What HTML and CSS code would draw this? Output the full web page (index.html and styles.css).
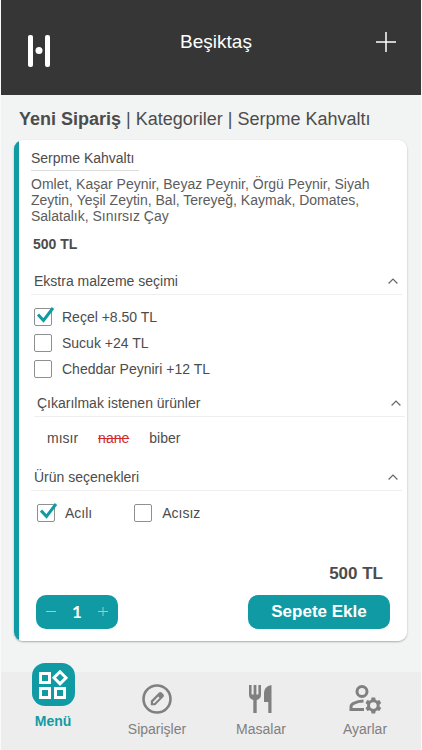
FILE: index.html
```html
<!DOCTYPE html>
<html lang="tr">
<head>
<meta charset="utf-8">
<meta name="viewport" content="width=device-width, initial-scale=1">
<title>Yeni Sipariş</title>
<link rel="stylesheet" href="styles.css">
</head>
<body>
<header class="topbar">
  <svg class="logo" width="22" height="32" viewBox="0 0 22 32" role="img" aria-label="H">
    <rect width="5" height="32" rx="2"/><rect x="17" width="5" height="32" rx="2"/><circle cx="11" cy="15.500" r="3.500"/>
  </svg>
  <h1 class="branch">Beşiktaş</h1>
  <button class="add" type="button" aria-label="Ekle">
    <svg width="20" height="20" viewBox="0 0 20 20"><path d="M10 0v20M0 10h20"/></svg>
  </button>
</header>

<main class="content">
  <nav class="crumbs" aria-label="Konum"><strong>Yeni Sipariş</strong> | <a href="#">Kategoriler</a> | <a href="#">Serpme Kahvaltı</a></nav>

  <form class="card">
    <h2 class="name">Serpme Kahvaltı</h2>
    <p class="desc">Omlet, Kaşar Peynir, Beyaz Peynir, Örgü Peynir, Siyah Zeytin, Yeşil Zeytin, Bal, Tereyeğ, Kaymak, Domates, Salatalık, Sınırsız Çay</p>
    <p class="price">500 TL</p>

    <section class="group">
      <button class="heading" type="button">Ekstra malzeme seçimi
        <svg class="chevron" width="10" height="6" viewBox="0 0 10 6"><path d="M.6 5.500 5 1l4.400 4.500"/></svg></button>
      <div class="options">
        <label class="option"><span class="box"><input type="checkbox" checked><svg class="tick" width="18" height="16" viewBox="0 0 18 16"><path d="M1 7.500 6.500 13.500 16 1"/></svg></span>Reçel +8.50 TL</label>
        <label class="option"><span class="box"><input type="checkbox"><svg class="tick" width="18" height="16" viewBox="0 0 18 16"><path d="M1 7.500 6.500 13.500 16 1"/></svg></span>Sucuk +24 TL</label>
        <label class="option"><span class="box"><input type="checkbox"><svg class="tick" width="18" height="16" viewBox="0 0 18 16"><path d="M1 7.500 6.500 13.500 16 1"/></svg></span>Cheddar Peyniri +12 TL</label>
      </div>
    </section>

    <section class="group group-removals">
      <button class="heading" type="button">Çıkarılmak istenen ürünler
        <svg class="chevron" width="10" height="6" viewBox="0 0 10 6"><path d="M.6 5.500 5 1l4.400 4.500"/></svg></button>
      <div class="removals">
        <button type="button">mısır</button>
        <button type="button" class="removed">nane</button>
        <button type="button">biber</button>
      </div>
    </section>

    <section class="group group-choices">
      <button class="heading" type="button">Ürün seçenekleri
        <svg class="chevron" width="10" height="6" viewBox="0 0 10 6"><path d="M.6 5.500 5 1l4.400 4.500"/></svg></button>
      <div class="options options-row">
        <label class="option"><span class="box"><input type="checkbox" checked><svg class="tick" width="18" height="16" viewBox="0 0 18 16"><path d="M1 7.500 6.500 13.500 16 1"/></svg></span>Acılı</label>
        <label class="option"><span class="box"><input type="checkbox"><svg class="tick" width="18" height="16" viewBox="0 0 18 16"><path d="M1 7.500 6.500 13.500 16 1"/></svg></span>Acısız</label>
      </div>
    </section>

    <p class="total">500 TL</p>
    <div class="actions">
      <div class="stepper">
        <button type="button" aria-label="Azalt"><svg width="10" height="10" viewBox="0 0 10 10"><path d="M0 4.500h10"/></svg></button>
        <output>1</output>
        <button type="button" aria-label="Artır"><svg width="10" height="10" viewBox="0 0 10 10"><path d="M0 4.500h10M5 0v9"/></svg></button>
      </div>
      <button class="submit" type="button">Sepete Ekle</button>
    </div>
  </form>
</main>

<nav class="tabs" aria-label="Ana menü">
  <a class="tab active" href="#">
    <span class="tile"><svg width="30" height="30" viewBox="0 0 30 30"><path d="M2.500 3.500h9v9h-9zM2.500 18.500h9v9h-9zM17.500 18.500h9v9h-9zM22 1.800l6 6-6 6-6-6z"/></svg></span>
    Menü</a>
  <a class="tab" href="#">
    <svg width="30" height="30" viewBox="0 0 30 30"><circle cx="15" cy="15" r="13.500" fill="none" stroke="currentColor" stroke-width="2.600"/><path fill="currentColor" fill-rule="evenodd" d="M8.800 21.200v-4.400l8.200-8.200q1.300-1.200 2.700 0l1.700 1.700q1.200 1.400 0 2.700l-8.200 8.200zM11 19.200h1.300l5.300-5.300-1.400-1.400-5.200 5.400z"/></svg>
    Siparişler</a>
  <a class="tab" href="#">
    <svg width="24" height="30" viewBox="0 0 24 30"><path fill="currentColor" d="M0 1h2.600v9.500h2V1h2.800v9.500h2V1H12v9.500q0 4.500-4.300 5.400V29H4.300V15.900Q0 15 0 10.500zM22.500 1v28h-3.200V18H15V9q0-6.500 7.500-8z"/></svg>
    Masalar</a>
  <a class="tab" href="#">
    <svg width="34" height="30" viewBox="0 0 34 30"><g fill="none" stroke="currentColor" stroke-width="3"><circle cx="14" cy="7.500" r="5"/><path d="M16 25.500H3v-2.700q0-2.300 2.500-3.500 4.500-2.200 10-2.300"/></g><path fill="currentColor" fill-rule="evenodd" transform="translate(2.500 2.300) scale(.9)" d="M23.400 12.500h4l.5 2.400 1.900 1.100 2.300-.8 2 3.400-1.800 1.600v2.300l1.800 1.600-2 3.400-2.300-.8-1.900 1.100-.5 2.400h-4l-.5-2.400-1.900-1.100-2.300.8-2-3.400 1.800-1.600v-2.300l-1.800-1.600 2-3.400 2.300.8 1.900-1.100zM25.400 17.700a3.700 3.700 0 1 0 0 7.400 3.700 3.700 0 0 0 0-7.400z"/></svg>
    Ayarlar</a>
</nav>
</body>
</html>
```
FILE: styles.css
```css
* {
  box-sizing: border-box;
}

body {
  --teal: #109ba4;
  --text: #4c4c4c;
  display: flex;
  flex-direction: column;
  min-height: 100vh;
  margin: 0;
  border: solid #f9fafa;
  border-width: 0 1px;
  background: #f2f4f4;
  color: var(--text);
  font: 14px/16px "Liberation Sans", Arial, sans-serif;
}

h1, h2, p {
  margin: 0;
  font-weight: normal;
}

button {
  padding: 0;
  border: 0;
  background: none;
  color: inherit;
  font: inherit;
  cursor: pointer;
}

a {
  color: inherit;
  text-decoration: none;
}

svg {
  flex: none;
}

.topbar {
  display: grid;
  grid-template-columns: 1fr auto 1fr;
  align-items: start;
  height: 95px;
  padding: 31px 25px 0 27px;
  background: #363636;
  color: #fff;
}

.logo {
  margin-top: 4px;
  fill: #fff;
}

.branch {
  padding-left: 8px;
  font-size: 19px;
  line-height: 22px;
}

.add {
  justify-self: end;
  height: 22px;
}

.add svg {
  display: block;
  fill: none;
  stroke: #fff;
  stroke-width: 1.5;
}

.content {
  flex: 1;
  padding: 14px 14px 31px 13px;
}

.crumbs {
  margin: 0 0 11px 5px;
  font-size: 18px;
  line-height: 20px;
}

.card {
  padding: 10px 5px 12px 17px;
  border-radius: 9px;
  background: linear-gradient(to right, var(--teal) 5px, #fff 5px);
  box-shadow: 0 1px 2px #aaa;
}

.name {
  width: fit-content;
  padding: 0 4px 4px 0;
  border-bottom: 1px solid #ddd;
  font-size: 14px;
}

.desc {
  margin: 5px 20px 12px 0;
  color: #5c5c5c;
}

.price {
  margin: 0 0 16px 2px;
  font-size: 14px;
  font-weight: bold;
}

.group-removals {
  margin: 8px -3px 0 3px;
}

.group-choices {
  margin-top: 18px;
}

.heading {
  display: flex;
  align-items: center;
  justify-content: space-between;
  width: 100%;
  height: 27px;
  padding: 0 4px 0 3px;
  border-bottom: 1px solid #eee;
}

.chevron {
  fill: none;
  stroke: #666;
  stroke-width: 1.2;
}

.options {
  padding: 9px 0 0 3px;
}

.options-row {
  display: flex;
  gap: 42px;
  padding-left: 6px;
}

.option {
  display: flex;
  align-items: center;
  gap: 10px;
  height: 26px;
}

.box {
  position: relative;
  display: flex;
}

.box input {
  width: 18px;
  height: 18px;
  margin: 0;
  border: 1px solid #8d9191;
  border-radius: 2px;
  background: #fff;
  appearance: none;
}

.tick {
  position: absolute;
  top: -1px;
  left: 3px;
  display: none;
  fill: none;
  stroke: var(--teal);
  stroke-width: 3;
}

.box input:checked + .tick {
  display: block;
}

.removals {
  display: flex;
  gap: 20px;
  padding: 13px 13px 0;
}

.removed {
  color: #d3282b;
  text-decoration: line-through;
}

.total {
  margin: 38px 19px 11px 0;
  font-size: 17px;
  font-weight: bold;
  line-height: 20px;
  text-align: right;
}

.actions {
  display: flex;
  justify-content: space-between;
  padding: 0 12px 0 5px;
}

.stepper,
.submit {
  height: 34px;
  border-radius: 10px;
  background: var(--teal);
  color: #fff;
  font-weight: bold;
}

.stepper {
  display: flex;
  align-items: center;
  justify-content: space-between;
  width: 82px;
  padding: 0 10px;
  font-family: Lato, sans-serif;
  font-size: 17px;
}

.stepper svg {
  display: block;
  stroke: #8fd0d4;
}

.submit {
  width: 142px;
  font-size: 17px;
}

.tabs {
  display: grid;
  grid-template-columns: repeat(4, 1fr);
  height: 78px;
  padding-right: 4px;
  background: #ededed;
  color: #808080;
}

.tab {
  display: flex;
  flex-direction: column;
  align-items: center;
  gap: 7px;
  padding-top: 12px;
}

.active {
  margin-top: -9px;
  padding-top: 0;
  color: var(--teal);
  font-weight: bold;
}

.tile {
  display: grid;
  place-items: center;
  width: 43px;
  height: 43px;
  border-radius: 13px;
  background: var(--teal);
}

.tile svg {
  fill: none;
  stroke: #fff;
  stroke-width: 3;
}
```
